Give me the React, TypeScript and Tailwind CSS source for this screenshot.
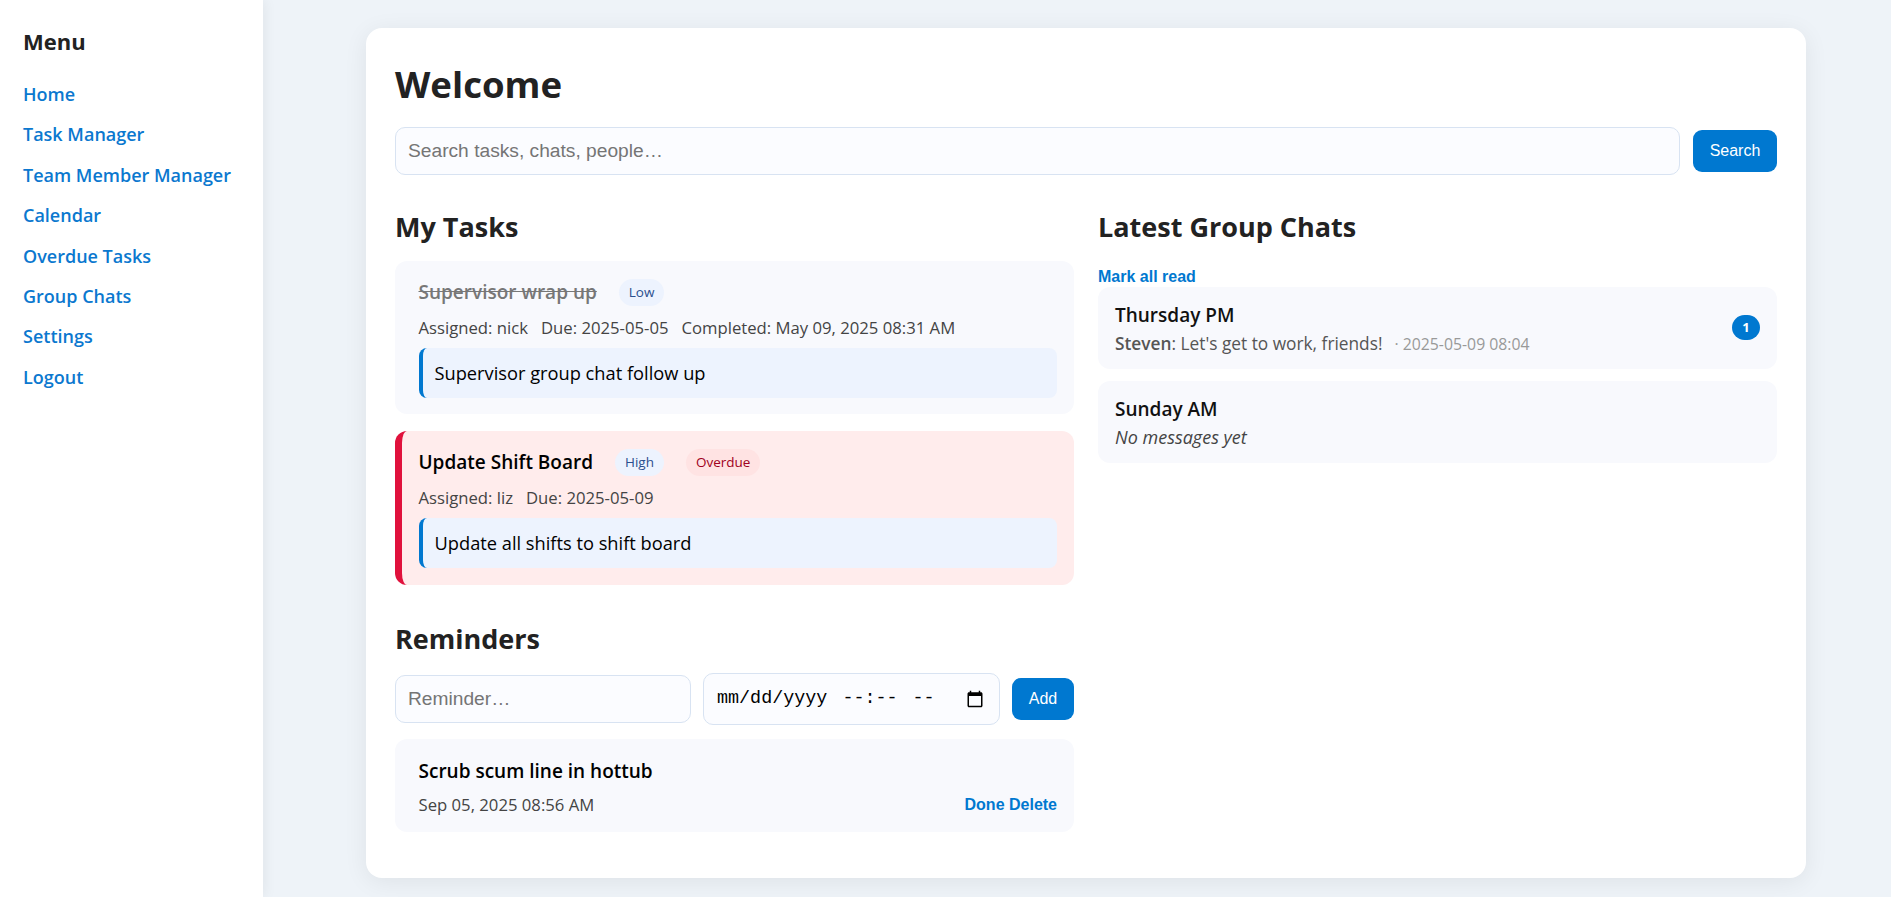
import React from "react";

const links = ["Home", "Task Manager", "Team Member Manager", "Calendar", "Overdue Tasks", "Group Chats", "Settings", "Logout"];
const font = "font-['Open_Sans','Noto_Sans',sans-serif]";
const btn = "bg-[#0078d0] text-white rounded-[9px] font-['Liberation_Sans',sans-serif] text-[16px]";
const inputBase = "border border-[#d8e3f2] bg-[#fbfcff] outline-none placeholder:text-[#757575] font-['Liberation_Sans',sans-serif] text-[19.2px] px-3";

function Pill({ label, color = "text-[#2b4f8e]", bg = "bg-[#edf3fe]" }: { label: string; color?: string; bg?: string }) {
  return <span className={`${bg} ${color} rounded-full text-[13.5px] px-[10px] py-[4px] leading-[19px]`}>{label}</span>;
}

function Note({ text }: { text: string }) {
  return (
    <div className="mt-[8px] h-[50px] flex items-center bg-[#edf3fe] border-l-[4px] border-[#0078d0] rounded-[8px] pl-[12px] pr-3 text-[18.25px] text-black">
      {text}
    </div>
  );
}

export default function App() {
  return (
    <div className={`flex min-h-[897px] bg-[#eef3f8] text-[#1c1c1c] ${font}`}>
      <aside className="w-[263px] shrink-0 bg-white pl-[23px] pt-[26px] shadow-[2px_0_12px_rgba(0,0,0,0.06)]">
        <h2 className="text-[22px] leading-[30px] font-bold text-[#222]">Menu</h2>
        <nav className="mt-[24px] flex flex-col gap-[12.4px]">
          {links.map((l) => (
            <a key={l} className="text-[#0b78cf] text-[18px] leading-[28px] font-semibold">{l}</a>
          ))}
        </nav>
      </aside>

      <main className="flex-1 pl-[103px] pr-[85px] pt-[28px]">
        <div className="bg-white rounded-[16px] w-[1440px] h-[850px] px-[29px] pt-[29px] shadow-[0_4px_24px_rgba(0,0,0,0.07)]">
          <h1 className="text-[36.6px] leading-[54px] font-bold text-[#222]">Welcome</h1>
          <div className="mt-[16px] flex items-center gap-[13px]">
            <input placeholder="Search tasks, chats, people…" className={`${inputBase} flex-1 h-[48px] rounded-[10px]`} />
            <button className={`${btn} w-[84px] h-[42px]`}>Search</button>
          </div>

          <div className="mt-[31px] grid grid-cols-2 gap-x-[24px]">
            <section>
              <h2 className="text-[27px] leading-[42px] font-bold text-[#222]">My Tasks</h2>
              <div className="mt-[13px] bg-[#f8f9fd] rounded-[12px] pl-[23.5px] pr-[17px] pt-[17px] pb-[16px]">
                <div className="flex items-center gap-[22px] h-[28px]">
                  <span className="text-[19px] leading-[28px] font-semibold line-through text-[#777]">Supervisor wrap up</span>
                  <Pill label="Low" />
                </div>
                <p className="mt-[10px] text-[16.7px] leading-[24px] text-[#444] whitespace-pre">Assigned: nick   Due: 2025-05-05   Completed: May 09, 2025 08:31 AM</p>
                <Note text="Supervisor group chat follow up" />
              </div>

              <div className="mt-[17px] bg-[#ffecec] border-l-[7px] border-[#e0113c] rounded-[12px] pl-[16.5px] pr-[17px] pt-[17px] pb-[17px]">
                <div className="flex items-center gap-[22px] h-[28px]">
                  <span className="text-[19px] leading-[28px] font-semibold text-black">Update Shift Board</span>
                  <Pill label="High" />
                  <Pill label="Overdue" color="text-[#a00020]" bg="bg-[#ffe3e3]" />
                </div>
                <p className="mt-[10px] text-[16.7px] leading-[24px] text-[#444] whitespace-pre">Assigned: liz   Due: 2025-05-09</p>
                <Note text="Update all shifts to shift board" />
              </div>

              <h2 className="mt-[33px] text-[27px] leading-[42px] font-bold text-[#222]">Reminders</h2>
              <div className="mt-[13px] flex items-center gap-[12px]">
                <input placeholder="Reminder…" className={`${inputBase} w-[296px] h-[48px] rounded-[10px]`} />
                <div className="w-[297px] h-[52px] rounded-[10px] border border-[#d8e3f2] bg-[#fbfcff] pl-[13px] pr-[15px] flex items-center text-[18.4px] text-black font-['Liberation_Mono',monospace] whitespace-pre">
                  <span>mm/dd/yyyy</span>
                  <span className="ml-[15px]">--:--</span>
                  <span className="ml-[15px]">--</span>
                  <svg className="ml-auto" width="18" height="20" viewBox="0 0 24 24" fill="black">
                    <path d="M20 3h-1V1h-2v2H7V1H5v2H4c-1.100 0-2 .9-2 2v16c0 1.100.9 2 2 2h16c1.100 0 2-.9 2-2V5c0-1.100-.9-2-2-2zm0 18H4V8h16v13z" />
                  </svg>
                </div>
                <button className={`${btn} w-[62px] h-[42px]`}>Add</button>
              </div>
              <div className="mt-[14px] bg-[#f8f9fd] rounded-[12px] pl-[23.5px] pr-[17px] pt-[18px] pb-[15px]">
                <p className="text-[19px] leading-[28px] font-semibold text-black">Scrub scum line in hottub</p>
                <div className="mt-[8px] flex justify-between items-center">
                  <span className="text-[16.7px] leading-[24px] text-[#444]">Sep 05, 2025 08:56 AM</span>
                  <span className="font-['Liberation_Sans',sans-serif] text-[16px] font-bold text-[#0078d0]">Done Delete</span>
                </div>
              </div>
            </section>

            <section>
              <h2 className="text-[27px] leading-[42px] font-bold text-[#222]">Latest Group Chats</h2>
              <a className="block mt-[19px] font-['Liberation_Sans',sans-serif] text-[16px] leading-[20px] font-bold text-[#0078d0]">Mark all read</a>
              <div className="h-[82px] bg-[#f8f9fd] rounded-[12px] pl-[17px] pr-[17px] pt-[14px] flex justify-between">
                <div>
                  <p className="text-[19px] leading-[28px] font-semibold text-[#111]">Thursday PM</p>
                  <p className="mt-[1px] text-[17.3px] leading-[28px] text-[#555] whitespace-pre">
                    <b className="font-semibold">Steven</b>: Let's get to work, friends!
                    <span className="ml-[12px] text-[15.8px] text-[#999]">· 2025-05-09 08:04</span>
                  </p>
                </div>
                <span className="mt-[14px] w-[28px] h-[25px] rounded-full bg-[#0078d0] text-white text-[13px] font-bold flex items-center justify-center">1</span>
              </div>
              <div className="mt-[12px] h-[82px] bg-[#f8f9fd] rounded-[12px] pl-[17px] pr-[17px] pt-[14px]">
                <p className="text-[19px] leading-[28px] font-semibold text-[#111]">Sunday AM</p>
                <p className="text-[18px] leading-[28px] italic text-[#444]">No messages yet</p>
              </div>
            </section>
          </div>
        </div>
      </main>
    </div>
  );
}
